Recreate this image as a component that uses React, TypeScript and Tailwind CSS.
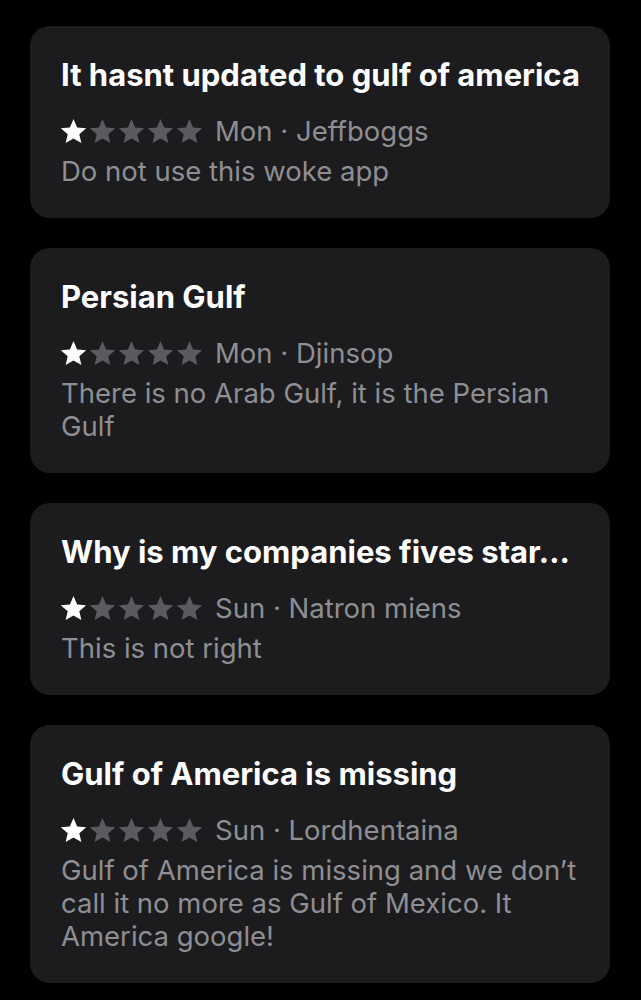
const reviews = [
  {
    title: "It hasnt updated to gulf of america",
    day: "Mon",
    author: "Jeffboggs",
    body: "Do not use this woke app",
  },
  {
    title: "Persian Gulf",
    day: "Mon",
    author: "Djinsop",
    body: "There is no Arab Gulf, it is the Persian Gulf",
  },
  {
    title: "Why is my companies fives star...",
    day: "Sun",
    author: "Natron miens",
    body: "This is not right",
  },
  {
    title: "Gulf of America is missing",
    day: "Sun",
    author: "Lordhentaina",
    body: "Gulf of America is missing and we don’t call it no more as Gulf of Mexico. It America google!",
  },
];

function Star({ filled }: { filled: boolean }) {
  return (
    <svg width="29" height="29" viewBox="0 0 24 24" className="shrink-0">
      <path
        d="M12 1.6l3 7 7.5.65-5.7 4.95 1.72 7.4L12 17.7l-6.52 3.9 1.72-7.4-5.7-4.95 7.5-.65z"
        fill={filled ? "#ffffff" : "#5a5a5f"}
      />
    </svg>
  );
}

export default function App() {
  return (
    <div className="min-h-[1000px] bg-black px-[30px] pt-[26px] pb-4 font-['Inter','Liberation_Sans',sans-serif]">
      <div className="flex flex-col gap-[30px] w-[580px]">
        {reviews.map((r, i) => (
          <div key={i} className="bg-[#1c1c1e] rounded-[20px] pl-[31px] pr-[18px] pt-[30px] pb-[30px]">
            <h2 className="text-white font-bold text-[31px] leading-[38px] whitespace-nowrap">
              {r.title}
            </h2>
            <div className="flex items-center mt-[20px] h-[34px]">
              <div className="flex -ml-[2px]">
                {[0, 1, 2, 3, 4].map((s) => (
                  <Star key={s} filled={s === 0} />
                ))}
              </div>
              <span className="ml-[11px] text-[#8e8e93] text-[27.5px] leading-[34px]">
                {r.day} · {r.author}
              </span>
            </div>
            <p className="mt-[7px] text-[#8e8e93] text-[27.5px] leading-[33px]">
              {r.body}
            </p>
          </div>
        ))}
      </div>
    </div>
  );
}
